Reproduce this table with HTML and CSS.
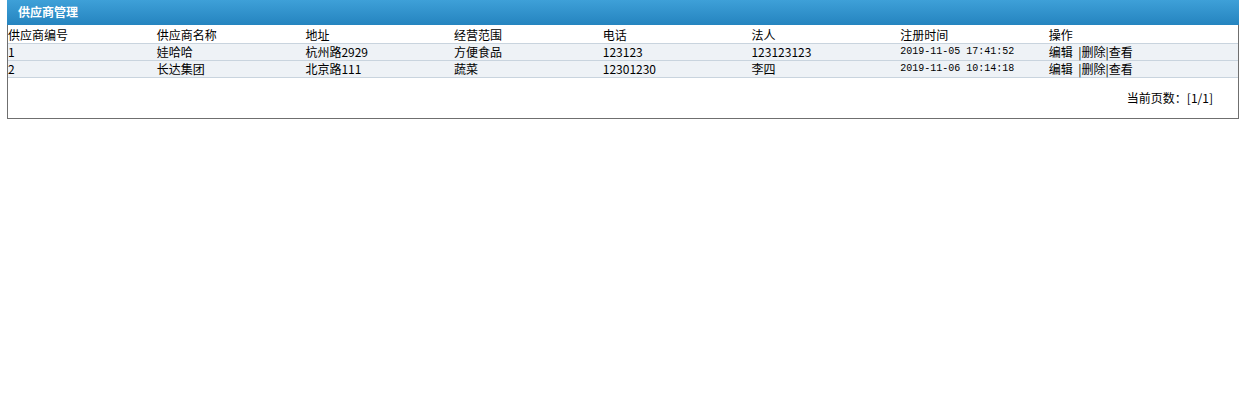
FILE: index.html
```html
<!DOCTYPE html>
<html lang="zh">
<head>
<meta charset="utf-8">
<title>供应商管理</title>
<link rel="stylesheet" href="styles.css">
</head>
<body>
<div class="panel">
  <div class="panel-title">供应商管理</div>
  <table class="grid">
    <thead>
      <tr>
        <th>供应商编号</th><th>供应商名称</th><th>地址</th><th>经营范围</th><th>电话</th><th>法人</th><th>注册时间</th><th>操作</th>
      </tr>
    </thead>
    <tbody>
      <tr>
        <td>1</td><td>娃哈哈</td><td>杭州路2929</td><td>方便食品</td><td>123123</td><td>123123123</td><td class="mono">2019-11-05 17:41:52</td><td>编辑 &nbsp;|删除|查看</td>
      </tr>
      <tr>
        <td>2</td><td>长达集团</td><td>北京路111</td><td>蔬菜</td><td>12301230</td><td>李四</td><td class="mono">2019-11-06 10:14:18</td><td>编辑 &nbsp;|删除|查看</td>
      </tr>
    </tbody>
  </table>
  <div class="pager">当前页数：[1/1]</div>
</div>
</body>
</html>
```
FILE: styles.css
```css
html, body {
  margin: 0;
  padding: 0;
  background: #ffffff;
}
body {
  font-family: "Noto Sans CJK SC", "Liberation Sans", sans-serif;
  font-size: 12px;
  color: #000;
}
.panel {
  margin: 0 2px 0 7px;
  border: 1px solid #6f6f6f;
  border-top: none;
  height: 119px;
  box-sizing: border-box;
  display: flex;
  flex-direction: column;
}
.panel-title {
  height: 25px;
  margin: 0 -1px;
  background: linear-gradient(#3ea0d8, #2584bf);
  color: #fff;
  font-weight: bold;
  font-size: 12px;
  line-height: 23px;
  padding-left: 11px;
  box-sizing: border-box;
}
.grid {
  width: 100%;
  border-collapse: collapse;
  table-layout: fixed;
  margin-top: 2px;
}
.grid th:nth-child(-n+7) {
  width: 148.7px;
}
.grid th,
.grid td {
  text-align: left;
  font-weight: normal;
  padding: 0;
  height: 16px;
  line-height: 16px;
  white-space: nowrap;
  border-bottom: 1px solid #c9d4de;
}
.grid tbody td {
  background: #eef2f6;
  font-size: 12px;
}
.grid td.mono {
  font-family: "Liberation Mono", "DejaVu Sans Mono", monospace;
  font-size: 10px;
}
.pager {
  text-align: right;
  padding-right: 25px;
  margin-top: 12px;
  line-height: 16px;
}
```
